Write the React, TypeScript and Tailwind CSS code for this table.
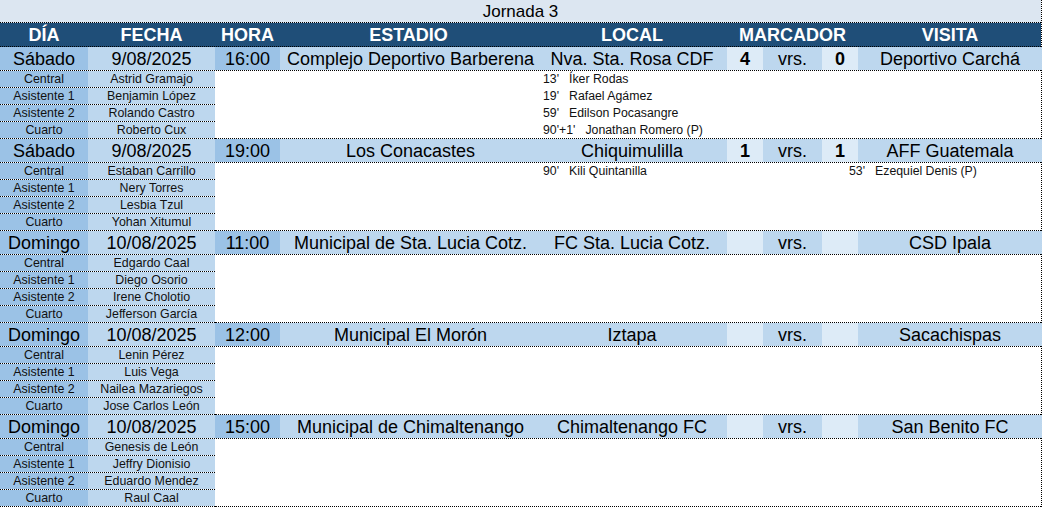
import React from "react";

type Goal = { m: string; n: string };
type Match = {
  dia: string;
  fecha: string;
  hora: string;
  estadio: string;
  local: string;
  gl: string;
  gv: string;
  visita: string;
  refs: string[];
  localGoals: Goal[];
  visitaGoals: Goal[];
};

const matches: Match[] = [
  {
    dia: "Sábado",
    fecha: "9/08/2025",
    hora: "16:00",
    estadio: "Complejo Deportivo Barberena",
    local: "Nva. Sta. Rosa CDF",
    gl: "4",
    gv: "0",
    visita: "Deportivo Carchá",
    refs: ["Astrid Gramajo", "Benjamin López", "Rolando Castro", "Roberto Cux"],
    localGoals: [
      { m: "13'", n: "Íker Rodas" },
      { m: "19'", n: "Rafael Agámez" },
      { m: "59'", n: "Edilson Pocasangre" },
      { m: "90'+1'", n: "Jonathan Romero (P)" },
    ],
    visitaGoals: [],
  },
  {
    dia: "Sábado",
    fecha: "9/08/2025",
    hora: "19:00",
    estadio: "Los Conacastes",
    local: "Chiquimulilla",
    gl: "1",
    gv: "1",
    visita: "AFF Guatemala",
    refs: ["Estaban Carrillo", "Nery Torres", "Lesbia Tzul", "Yohan Xitumul"],
    localGoals: [{ m: "90'", n: "Kili Quintanilla" }],
    visitaGoals: [{ m: "53'", n: "Ezequiel Denis (P)" }],
  },
  {
    dia: "Domingo",
    fecha: "10/08/2025",
    hora: "11:00",
    estadio: "Municipal de Sta. Lucia Cotz.",
    local: "FC Sta. Lucia Cotz.",
    gl: "",
    gv: "",
    visita: "CSD Ipala",
    refs: ["Edgardo Caal", "Diego Osorio", "Irene Cholotio", "Jefferson García"],
    localGoals: [],
    visitaGoals: [],
  },
  {
    dia: "Domingo",
    fecha: "10/08/2025",
    hora: "12:00",
    estadio: "Municipal El Morón",
    local: "Iztapa",
    gl: "",
    gv: "",
    visita: "Sacachispas",
    refs: ["Lenin Pérez", "Luis Vega", "Nailea Mazariegos", "Jose Carlos León"],
    localGoals: [],
    visitaGoals: [],
  },
  {
    dia: "Domingo",
    fecha: "10/08/2025",
    hora: "15:00",
    estadio: "Municipal de Chimaltenango",
    local: "Chimaltenango FC",
    gl: "",
    gv: "",
    visita: "San Benito FC",
    refs: ["Genesis de León", "Jeffry Dionisio", "Eduardo Mendez", "Raul Caal"],
    localGoals: [],
    visitaGoals: [],
  },
];

const roles = ["Central", "Asistente 1", "Asistente 2", "Cuarto"];

const cols = "grid grid-cols-[88px_127px_65px_257px_190px_36px_59px_36px_184px]";

function GoalList({ goals }: { goals: Goal[] }) {
  return (
    <div className="flex flex-col">
      {goals.map((g, i) => (
        <div key={i} className="h-[17px] flex items-center whitespace-nowrap text-[12.3px] text-[#111]">
          <span>{g.m}</span>
          <span className="ml-[10px]">{g.n}</span>
        </div>
      ))}
    </div>
  );
}

function MatchBlock({ m }: { m: Match }) {
  return (
    <div className="flex flex-col">
      <div className={`${cols} h-[24px] border-b border-dotted border-black text-[18px] text-black leading-none`}>
        <div className="bg-[#9bc2e6] flex items-center justify-center">{m.dia}</div>
        <div className="bg-[#bdd7ee] flex items-center justify-center">{m.fecha}</div>
        <div className="bg-[#9bc2e6] flex items-center justify-center">{m.hora}</div>
        <div className="bg-[#bdd7ee] flex items-center justify-center whitespace-nowrap pl-[4px]">{m.estadio}</div>
        <div className="bg-[#bdd7ee] flex items-center justify-center whitespace-nowrap">{m.local}</div>
        <div className="bg-[#ddebf7] flex items-center justify-center font-bold">{m.gl}</div>
        <div className="bg-[#bdd7ee] flex items-center justify-center">vrs.</div>
        <div className="bg-[#ddebf7] flex items-center justify-center font-bold">{m.gv}</div>
        <div className="bg-[#bdd7ee] flex items-center justify-center whitespace-nowrap">{m.visita}</div>
      </div>
      <div className="flex h-[68px]">
        <div className="flex flex-col w-[215px]">
          {m.refs.map((r, i) => (
            <div key={i} className="flex h-[17px] border-b border-dotted border-black text-[12.4px] text-[#111]">
              <div className="w-[88px] bg-[#9bc2e6] flex items-center justify-center">{roles[i]}</div>
              <div className="w-[127px] bg-[#bdd7ee] flex items-center justify-center whitespace-nowrap">{r}</div>
            </div>
          ))}
        </div>
        <div className="flex flex-1 border-b border-dotted border-black bg-white">
          <div className="w-[328px]" />
          <div className="w-[306px]">
            <GoalList goals={m.localGoals} />
          </div>
          <div className="flex-1">
            <GoalList goals={m.visitaGoals} />
          </div>
        </div>
      </div>
    </div>
  );
}

export default function App() {
  return (
    <div
      className="w-[1042px] h-[508px] bg-white overflow-hidden"
      style={{ fontFamily: '"Liberation Sans", Arial, sans-serif' }}
    >
      <div className="flex flex-col border-r border-dotted border-black">
        <div className="h-[23px] bg-[#dce6f1] border-b border-dotted border-black flex items-center justify-center text-[17px] text-black leading-none">
          Jornada 3
        </div>
        <div className={`${cols} h-[24px] bg-[#1f4e78] border-b border-dotted border-black text-white font-bold text-[18px] leading-none`}>
          <div className="flex items-center justify-center">DÍA</div>
          <div className="flex items-center justify-center">FECHA</div>
          <div className="flex items-center justify-center">HORA</div>
          <div className="flex items-center justify-center">ESTADIO</div>
          <div className="flex items-center justify-center">LOCAL</div>
          <div className="col-span-3 flex items-center justify-center">MARCADOR</div>
          <div className="flex items-center justify-center">VISITA</div>
        </div>
        {matches.map((m, i) => (
          <MatchBlock key={i} m={m} />
        ))}
      </div>
    </div>
  );
}
